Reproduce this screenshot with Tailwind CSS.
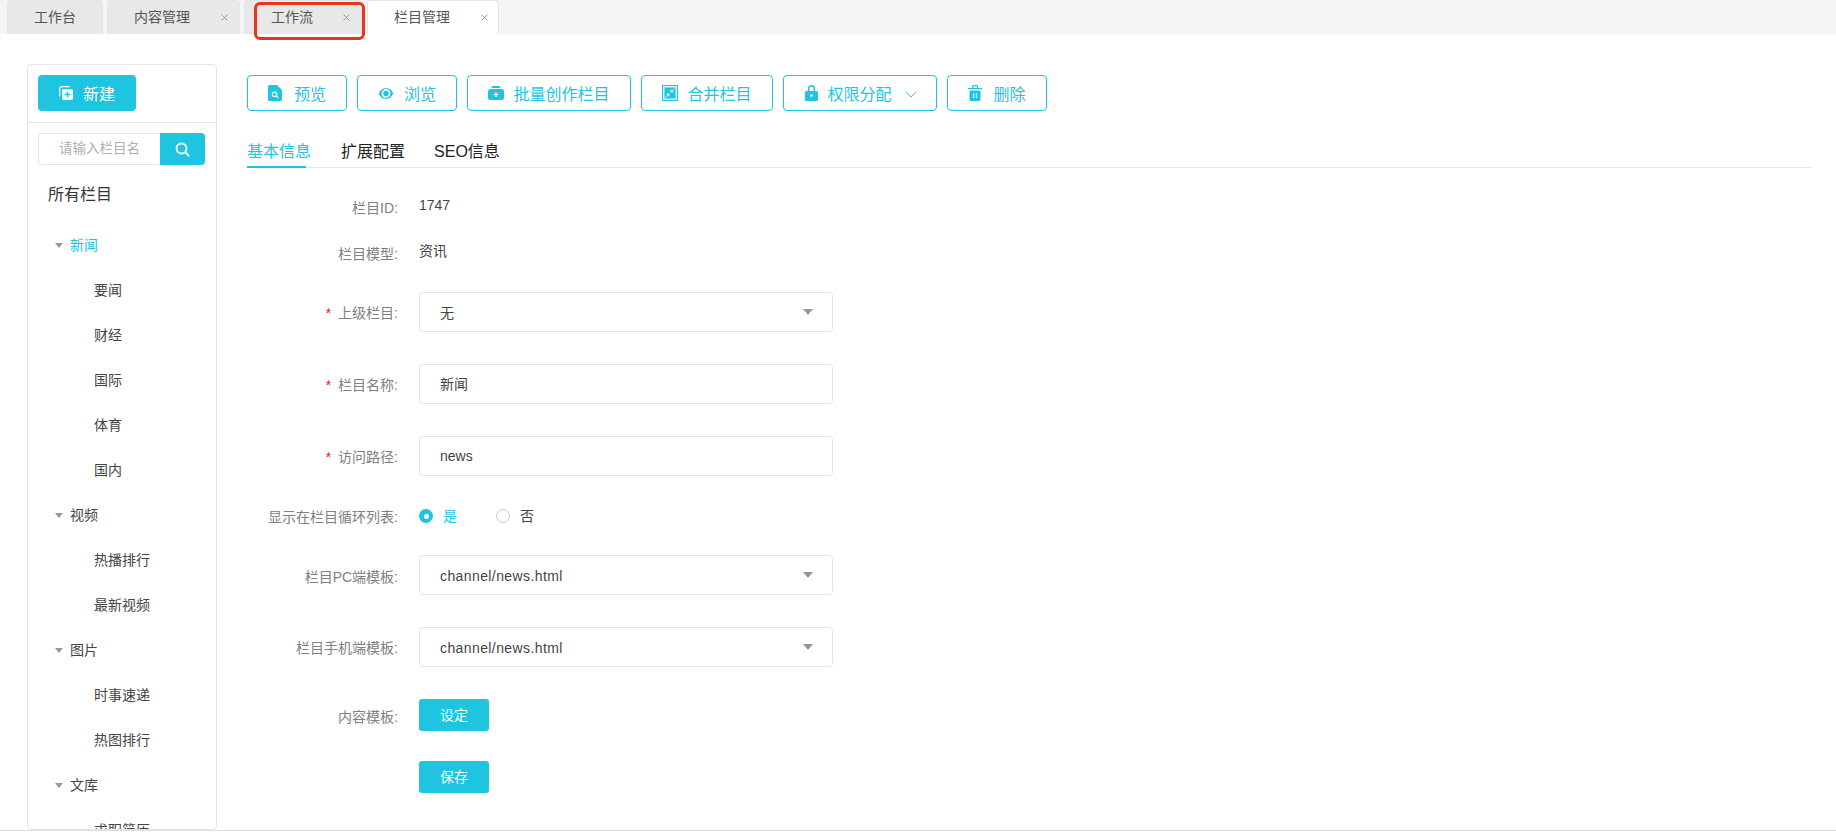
<!doctype html>
<html lang="zh">
<head>
<meta charset="utf-8">
<script src="https://cdn.jsdelivr.net/npm/@tailwindcss/browser@4"></script>
</head>
<body class="relative h-[833px] w-[1836px] overflow-hidden bg-white font-['Liberation_Sans','Noto_Sans_CJK_SC',sans-serif] text-[14px] text-[#333]">
  <!-- tabs -->
  <div class="flex h-[34px] gap-[4px] bg-[#f5f5f5] pl-[7px]">
    <div class="flex h-[34px] w-[96px] items-center justify-center rounded-t-[4px] border border-b-0 border-[#e6e6e6] bg-[#e8e8e8] text-[#555]">工作台</div>
    <div class="flex h-[34px] w-[133px] items-center rounded-t-[4px] border border-b-0 border-[#e6e6e6] bg-[#e8e8e8] pl-[26px] pr-[11px] text-[#555]"><span class="flex-1">内容管理</span><svg width="7" height="7" viewBox="0 0 7 7" fill="none" stroke="#888" stroke-width="0.8"><path d="M.5.5l6 6M6.500.5l-6 6"/></svg></div>
    <div class="flex h-[34px] w-[119px] items-center rounded-t-[4px] border border-b-0 border-[#e6e6e6] bg-[#e8e8e8] pl-[26px] pr-[12px] text-[#555]"><span class="flex-1">工作流</span><svg width="7" height="7" viewBox="0 0 7 7" fill="none" stroke="#888" stroke-width="0.8"><path d="M.5.5l6 6M6.500.5l-6 6"/></svg></div>
    <div class="flex h-[34px] w-[132px] items-center rounded-t-[4px] border border-b-0 border-[#e6e6e6] bg-white pl-[26px] pr-[10px] text-[#555]"><span class="flex-1">栏目管理</span><svg width="7" height="7" viewBox="0 0 7 7" fill="none" stroke="#888" stroke-width="0.8"><path d="M.5.5l6 6M6.500.5l-6 6"/></svg></div>
  </div>
  <!-- annotation -->
  <div class="absolute left-[254px] top-[2px] h-[38px] w-[111px] rounded-[6px] border-[3px] border-[#e8341c]"></div>

  <div class="flex h-[797px] items-start border-b border-[#ddd] pl-[27px]">
    <!-- sidebar -->
    <aside class="mt-[30px] h-[766px] w-[190px] shrink-0 overflow-hidden rounded-[4px] border border-[#e6e6e6]">
      <div class="border-b border-[#e6e6e6] px-[10px] pb-[11px] pt-[10px]">
        <button class="flex h-[36px] w-[98px] items-center justify-center gap-[10px] rounded-[4px] bg-[#1fc4e0] text-[16px] text-white">
          <svg width="14" height="14" viewBox="0 0 14 14" fill="none"><path d="M.7 10.500V2.700a2 2 0 0 1 2-2h7.800" stroke="#fff" stroke-width="1.200"/><rect x="3" y="3" width="11" height="11" rx="2" fill="#fff"/><path d="M8.500 5.500v6M5.500 8.500h6" stroke="#1fc4e0" stroke-width="1.400"/></svg>
          <span class="relative top-[2px]">新建</span>
        </button>
      </div>
      <div class="px-[10px] pt-[10px]">
        <div class="flex h-[32px] w-[167px]">
          <div class="flex flex-1 items-center rounded-l-[4px] border border-r-0 border-[#e6e6e6] pl-[20px] text-[13.500px] text-[#b0b0b0]">请输入栏目名</div>
          <div class="flex w-[45px] items-center justify-center rounded-r-[4px] bg-[#1fc4e0]">
            <svg width="15" height="15" viewBox="0 0 15 15" fill="none" stroke="#fff" stroke-width="1.800"><circle cx="6.500" cy="6.500" r="5"/><path d="M10.300 10.300L14 14"/></svg>
          </div>
        </div>
      </div>
      <div class="pl-[20px] pt-[18px] text-[16px] leading-[24px] text-[#333]">所有栏目</div>
      <ul class="pt-[16px] leading-[45px] text-[#444]">
        <li class="flex h-[45px] items-center gap-[7px] pl-[27px] text-[#1fc4e0]"><span class="h-0 w-0 border-x-[4.500px] border-t-[5px] border-x-transparent border-t-[#999]"></span>新闻</li>
        <li class="h-[45px] pl-[66px]">要闻</li>
        <li class="h-[45px] pl-[66px]">财经</li>
        <li class="h-[45px] pl-[66px]">国际</li>
        <li class="h-[45px] pl-[66px]">体育</li>
        <li class="h-[45px] pl-[66px]">国内</li>
        <li class="flex h-[45px] items-center gap-[7px] pl-[27px]"><span class="h-0 w-0 border-x-[4.500px] border-t-[5px] border-x-transparent border-t-[#999]"></span>视频</li>
        <li class="h-[45px] pl-[66px]">热播排行</li>
        <li class="h-[45px] pl-[66px]">最新视频</li>
        <li class="flex h-[45px] items-center gap-[7px] pl-[27px]"><span class="h-0 w-0 border-x-[4.500px] border-t-[5px] border-x-transparent border-t-[#999]"></span>图片</li>
        <li class="h-[45px] pl-[66px]">时事速递</li>
        <li class="h-[45px] pl-[66px]">热图排行</li>
        <li class="flex h-[45px] items-center gap-[7px] pl-[27px]"><span class="h-0 w-0 border-x-[4.500px] border-t-[5px] border-x-transparent border-t-[#999]"></span>文库</li>
        <li class="h-[45px] pl-[66px]">求职简历</li>
      </ul>
    </aside>

    <!-- main -->
    <main class="ml-[30px] mr-[25px] flex-1 pt-[41px]">
      <div class="flex gap-[10px] text-[16px] text-[#1fc4e0]">
        <button class="flex h-[36px] w-[100px] items-center justify-center gap-[12px] rounded-[4px] border border-[#1fc4e0]">
          <svg width="14" height="16" viewBox="0 0 14 16"><path fill-rule="evenodd" d="M1.500 0H9l5 5v9.500a1.500 1.500 0 0 1-1.500 1.500h-11A1.500 1.500 0 0 1 0 14.500v-13A1.500 1.500 0 0 1 1.500 0zM6.500 6.500a2.800 2.800 0 1 0 1.600 5.100l1.800 1.800.9-.9-1.800-1.800A2.800 2.800 0 0 0 6.500 6.500zm0 1.200a1.600 1.600 0 1 1 0 3.200 1.600 1.600 0 0 1 0-3.200z" fill="#1fc4e0"/></svg><span class="relative top-[2px]">预览</span></button>
        <button class="flex h-[36px] w-[100px] items-center justify-center gap-[10px] rounded-[4px] border border-[#1fc4e0]">
          <svg width="16" height="11" viewBox="0 0 16 12"><path fill-rule="evenodd" d="M8 0c3.500 0 6.300 2.500 8 6-1.700 3.500-4.500 6-8 6s-6.300-2.500-8-6c1.700-3.500 4.500-6 8-6zm0 1.200a4.800 4.800 0 1 0 0 9.600 4.800 4.800 0 0 0 0-9.600z" fill="#1fc4e0"/><circle cx="8" cy="6" r="2.900" fill="#1fc4e0"/></svg><span class="relative top-[2px]">浏览</span></button>
        <button class="flex h-[36px] w-[164px] items-center justify-center gap-[9px] rounded-[4px] border border-[#1fc4e0]">
          <svg width="16" height="14" viewBox="0 0 16 14"><path d="M3.500 1.500A1.500 1.500 0 0 1 5 0h6a1.500 1.500 0 0 1 1.500 1.500V2H3.500z" fill="#1fc4e0"/><path d="M2.500 3h11A2.500 2.500 0 0 1 16 5.500v6a2.500 2.500 0 0 1-2.500 2.500h-11A2.500 2.500 0 0 1 0 11.500v-6A2.500 2.500 0 0 1 2.500 3z" fill="#1fc4e0"/><path d="M8 6v5M5.500 8.500h5" stroke="#fff" stroke-width="1.200"/></svg><span class="relative top-[2px]">批量创作栏目</span></button>
        <button class="flex h-[36px] w-[132px] items-center justify-center gap-[9px] rounded-[4px] border border-[#1fc4e0]">
          <svg width="16" height="16" viewBox="0 0 16 16"><rect width="16" height="16" fill="#1fc4e0"/><rect x="1" y="1" width="14" height="14" fill="#d8f5fa"/><rect x="2.500" y="2.500" width="11" height="11" fill="#1fc4e0"/><path d="M12.500 3.500L9 7M9 4.500V7h2.500M3.500 12.500L7 9M4.500 9H7v2.500" stroke="#fff" fill="none"/></svg><span class="relative top-[2px]">合并栏目</span></button>
        <button class="flex h-[36px] w-[154px] items-center justify-center gap-[9px] rounded-[4px] border border-[#1fc4e0]">
          <svg width="13" height="16" viewBox="0 0 13 16"><path fill-rule="evenodd" d="M3 6V3.500a3.500 3.500 0 0 1 7 0V6h1.500A1.500 1.500 0 0 1 13 7.500v7a1.500 1.500 0 0 1-1.500 1.500h-10A1.500 1.500 0 0 1 0 14.500v-7A1.500 1.500 0 0 1 1.500 6zm1.500 0h4V3.500a2 2 0 0 0-4 0z" fill="#1fc4e0"/><circle cx="6.500" cy="10.500" r="1.300" fill="#fff"/></svg><span class="relative top-[2px]">权限分配</span>
          <svg width="12" height="7" viewBox="0 0 12 7" fill="none" stroke="#3cc8e0" stroke-width="1" class="relative left-[2px] top-[1px] ml-[2px]"><path d="M.7.700L6 6l5.300-5.300"/></svg></button>
        <button class="flex h-[36px] w-[100px] items-center justify-center gap-[11px] rounded-[4px] border border-[#1fc4e0]">
          <svg width="14" height="16" viewBox="0 0 14 16"><path fill-rule="evenodd" d="M0 3h4V1.500A1.500 1.500 0 0 1 5.500 0h3A1.500 1.500 0 0 1 10 1.500V3h4v1.300H0zM5.200 3h3.600V1.200H5.200zM1.500 5.500h11v9A1.500 1.500 0 0 1 11 16H3a1.500 1.500 0 0 1-1.500-1.500zM5 8.500V13h1.200V8.500zm2.800 0V13H9V8.500z" fill="#1fc4e0"/></svg><span class="relative top-[2px]">删除</span></button>
      </div>

      <div class="mt-[26px] flex h-[31px] gap-[30px] border-b border-[#e6e6e6] text-[16px] leading-[30px] text-[#222]">
        <div class="relative h-[30px] whitespace-nowrap text-[#1fc4e0]">基本信息<span class="absolute bottom-[-1px] left-0 h-[2px] w-[59px] bg-[#1fc4e0]"></span></div>
        <div>扩展配置</div>
        <div class="-ml-[1px]">SEO信息</div>
      </div>

      <form class="pt-[23px] text-[#444]">
        <div class="flex h-[30px] items-center"><label class="relative top-[2px] w-[151px] text-right text-[#808080]">栏目ID:</label><span class="relative -top-[1px] ml-[21px]">1747</span></div>
        <div class="mt-[17px] flex h-[30px] items-center"><label class="relative top-[1px] w-[151px] text-right text-[#808080]">栏目模型:</label><span class="relative -top-[2px] ml-[21px]">资讯</span></div>
        <div class="mt-[24px] flex h-[40px] items-center"><label class="relative top-[1px] w-[151px] text-right text-[#808080]"><span class="mr-[3px] text-[#e02020]">* </span>上级栏目:</label>
          <div class="ml-[21px] flex h-[40px] w-[414px] items-center justify-between rounded-[4px] border border-[#e6e6e6] pl-[20px] pr-[19px]"><span class="relative top-[1px]">无</span><span class="h-0 w-0 border-x-[5px] border-t-[6px] border-x-transparent border-t-[#999]"></span></div></div>
        <div class="mt-[32px] flex h-[40px] items-center"><label class="relative top-[1px] w-[151px] text-right text-[#808080]"><span class="mr-[3px] text-[#e02020]">* </span>栏目名称:</label>
          <div class="ml-[21px] flex h-[40px] w-[414px] items-center rounded-[4px] border border-[#e6e6e6] pl-[20px]">新闻</div></div>
        <div class="mt-[32px] flex h-[40px] items-center"><label class="relative top-[1px] w-[151px] text-right text-[#808080]"><span class="mr-[3px] text-[#e02020]">* </span>访问路径:</label>
          <div class="ml-[21px] flex h-[40px] w-[414px] items-center rounded-[4px] border border-[#e6e6e6] pl-[20px]">news</div></div>
        <div class="mt-[20px] flex h-[40px] items-center"><label class="relative top-[1px] w-[151px] text-right text-[#808080]">显示在栏目循环列表:</label>
          <div class="ml-[21px] flex items-center">
            <span class="flex h-[14px] w-[14px] items-center justify-center rounded-full bg-[#1fc4e0]"><span class="h-[5px] w-[5px] rounded-full bg-white"></span></span>
            <span class="ml-[10px] text-[#1fc4e0]">是</span>
            <span class="ml-[39px] h-[14px] w-[14px] rounded-full border border-[#ccc]"></span>
            <span class="ml-[10px]">否</span>
          </div></div>
        <div class="mt-[19px] flex h-[40px] items-center"><label class="relative top-[2px] w-[151px] text-right text-[#808080]">栏目PC端模板:</label>
          <div class="ml-[21px] flex h-[40px] w-[414px] items-center justify-between rounded-[4px] border border-[#e6e6e6] pl-[20px] pr-[19px]"><span class="relative top-[1px] tracking-[0.4px]">channel/news.html</span><span class="h-0 w-0 border-x-[5px] border-t-[6px] border-x-transparent border-t-[#999]"></span></div></div>
        <div class="mt-[32px] flex h-[40px] items-center"><label class="relative top-[1px] w-[151px] text-right text-[#808080]">栏目手机端模板:</label>
          <div class="ml-[21px] flex h-[40px] w-[414px] items-center justify-between rounded-[4px] border border-[#e6e6e6] pl-[20px] pr-[19px]"><span class="relative top-[1px] tracking-[0.4px]">channel/news.html</span><span class="h-0 w-0 border-x-[5px] border-t-[6px] border-x-transparent border-t-[#999]"></span></div></div>
        <div class="mt-[32px] flex h-[32px] items-center"><label class="relative top-[2px] w-[151px] text-right text-[#808080]">内容模板:</label>
          <button type="button" class="ml-[21px] h-[32px] w-[70px] rounded-[3px] bg-[#1fc4e0] text-white">设定</button></div>
        <div class="mt-[30px] flex h-[32px] items-center"><span class="w-[151px]"></span>
          <button type="button" class="ml-[21px] h-[32px] w-[70px] rounded-[3px] bg-[#1fc4e0] text-white">保存</button></div>
      </form>
    </main>
  </div>
</body>
</html>
